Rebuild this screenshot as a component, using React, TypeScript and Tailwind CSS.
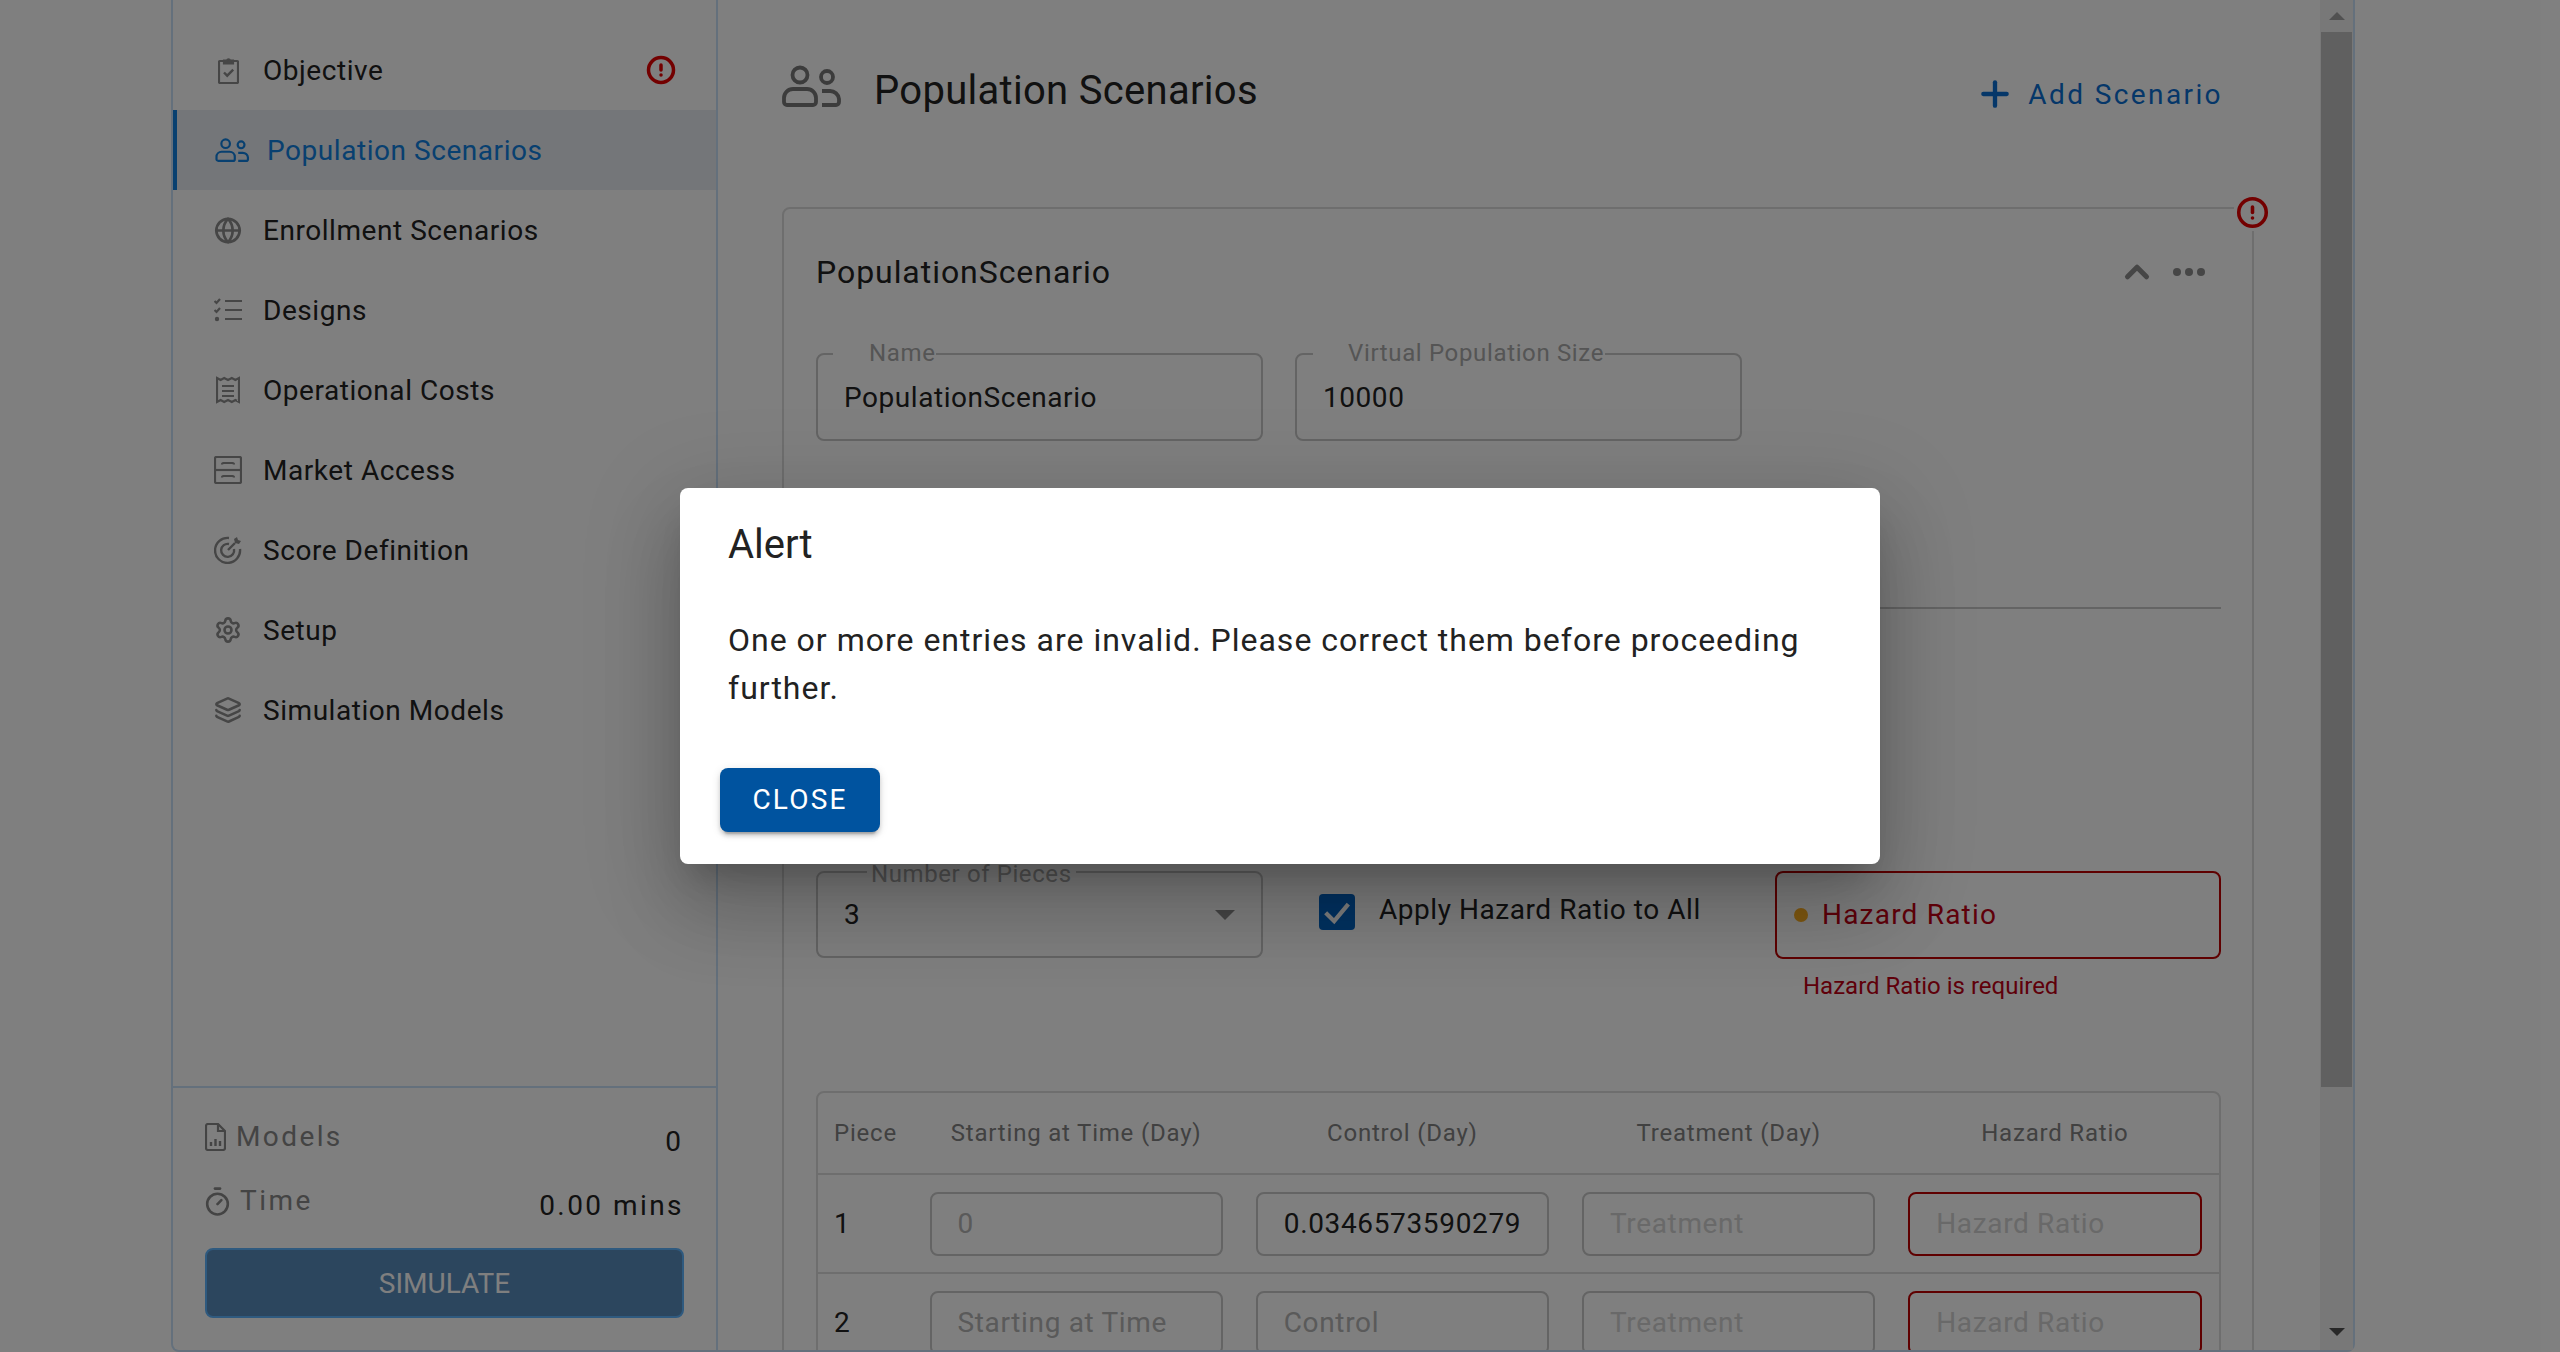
import { ChevronUp, CircleAlert, Globe, Layers, Plus, Settings, Timer } from 'lucide-react';

const Users = ({ className }: { className: string }) => (
  <svg viewBox="0 0 60 42" fill="none" stroke="currentColor" strokeWidth="3.8" className={className}>
    <circle cx="18" cy="10" r="7.5" />
    <path d="M2 37v-4a9 9 0 0 1 9-9h14a9 9 0 0 1 9 9v4a3 3 0 0 1-3 3H5a3 3 0 0 1-3-3z" />
    <circle cx="45" cy="12" r="6" />
    <path d="M40 26h8a9 9 0 0 1 9 8v3a3 3 0 0 1-3 3H40" />
  </svg>
);

const Clipboard = () => (
  <svg viewBox="0 0 21 27" fill="none" stroke="currentColor" strokeWidth="2.2" className="h-[27px] w-[21px]">
    <path d="M6 4H2a1 1 0 0 0-1 1v20a1 1 0 0 0 1 1h17a1 1 0 0 0 1-1V5a1 1 0 0 0-1-1h-4" />
    <path d="M6 6.5V3.5h3a1.6 1.6 0 0 1 3 0h3v3z" fill="currentColor" />
    <path d="M6 15.5l3.2 3.2 6-6" strokeWidth="2.4" />
  </svg>
);

const ListIcon = () => (
  <svg viewBox="0 0 28 24" fill="none" stroke="currentColor" strokeWidth="2.2" className="h-[24px] w-[28px]">
    <path d="M11 3h17M11 12h17M11 21h17" />
    <path d="M0.5 3l2 2 3.500-4M0.500 12l2 2 3.500-4" />
    <circle cx="3" cy="21" r="2.200" fill="currentColor" stroke="none" />
  </svg>
);

const Receipt = () => (
  <svg viewBox="0 0 24 28" fill="none" stroke="currentColor" strokeWidth="2.2" className="h-[28px] w-[24px]">
    <path d="M1 2l3.600 2 3.600-2 3.800 2 3.800-2 3.600 2 3.600-2v24l-3.600-2-3.600 2-3.800-2-3.800 2-3.600-2-3.600 2z" />
    <path d="M6 10h12M6 15h12M6 20h12" />
  </svg>
);

const Drawers = () => (
  <svg viewBox="0 0 28 28" fill="none" stroke="currentColor" strokeWidth="2.2" className="h-[28px] w-[28px]">
    <rect x="1" y="1" width="26" height="26" rx="1.500" />
    <path d="M1 14h26" />
    <path d="M8 8.500a1.500 1.500 0 0 1 1.500-1.500h9a1.500 1.500 0 0 1 1.500 1.500M8 21.500a1.500 1.500 0 0 1 1.500-1.500h9a1.500 1.500 0 0 1 1.500 1.500" />
  </svg>
);

const Target = () => (
  <svg viewBox="0 0 28 28" fill="none" stroke="currentColor" strokeWidth="2.400" className="h-[28px] w-[28px]">
    <path d="M15 2a12.500 12.500 0 1 0 11 11" />
    <path d="M15 8a6.500 6.500 0 1 0 5 5" />
    <path d="M14 14l7-7" />
    <path d="M20 3l1 4 4 1 2-3-3-1-1-3z" fill="currentColor" stroke="none" />
  </svg>
);

const FileChart = () => (
  <svg viewBox="0 0 21 28" fill="none" stroke="currentColor" strokeWidth="2.2" className="h-[28px] w-[21px]">
    <path d="M13 1H3a2 2 0 0 0-2 2v22a2 2 0 0 0 2 2h15a2 2 0 0 0 2-2V8z" />
    <path d="M13 1v7h7" />
    <path d="M6 23v-4M10.500 23v-7M15 23v-5" strokeWidth="2.400" />
  </svg>
);

const navItems = [
  { label: 'Objective', icon: <Clipboard />, error: true },
  { label: 'Population Scenarios', icon: <Users className="h-[24px] w-[35px]" />, active: true },
  { label: 'Enrollment Scenarios', icon: <Globe size={31} strokeWidth={2.300} /> },
  { label: 'Designs', icon: <ListIcon /> },
  { label: 'Operational Costs', icon: <Receipt /> },
  { label: 'Market Access', icon: <Drawers /> },
  { label: 'Score Definition', icon: <Target /> },
  { label: 'Setup', icon: <Settings size={32} strokeWidth={2.200} /> },
  { label: 'Simulation Models', icon: <Layers size={32} strokeWidth={2.200} /> },
];

const rows = [
  { piece: '1', start: '0', control: '0.034657359027997', startGrey: true },
  { piece: '2', start: '', control: '' },
];

const Sidebar = () => (
  <aside className="flex w-[545px] shrink-0 flex-col border-r-2 border-[#c8e0f8]">
    <nav className="flex-1 pt-[30px]">
      {navItems.map((item) => (
        <div
          key={item.label}
          className={`flex h-[80px] items-center text-[28px] tracking-[0.55px] ${
            item.active ? 'border-l-[4px] border-[#1080e0] bg-[#e8ecf2] pl-[38px] text-[#1080e0]' : 'pl-[41px] text-[#222]'
          }`}
        >
          <span className={`flex items-center justify-center text-[#8c8c8c] ${item.active ? 'w-[35px] text-[#1080e0]' : 'w-[28px]'}`}>
            {item.icon}
          </span>
          <span className={`pt-[2px] ${item.active ? 'ml-[17px]' : 'ml-[21px]'}`}>{item.label}</span>
          {item.error && <CircleAlert size={30} strokeWidth={2.800} className="ml-auto mr-[40px] text-[#e60000]" />}
        </div>
      ))}
    </nav>
    <div className="h-[264px] border-t-2 border-[#c8e0f8] px-[32px] pt-[33px] text-[28px]">
      <div className="flex h-[30px] justify-between">
        <span className="flex items-center gap-[10px] pt-[2px] tracking-[2.400px] text-[#888]">
          <FileChart />
          Models
        </span>
        <span className="mr-[3px] text-[#222]">0</span>
      </div>
      <div className="mt-[34px] flex h-[30px] justify-between">
        <span className="flex items-center pt-[2px] tracking-[2.500px] text-[#888]">
          <Timer size={31} strokeWidth={2} className="-ml-[3px]" />
          <span className="ml-[7px]">Time</span>
        </span>
        <span className="tracking-[2.450px] text-[#222]">0.00 mins</span>
      </div>
      <button className="mt-[33px] h-[70px] w-[479px] rounded-[8px] border-2 border-[#5eb4ff] bg-[#588cbc] pt-[1px] text-[28px] text-white">
        SIMULATE
      </button>
    </div>
  </aside>
);

const Field = ({ label, value, w, labelBox }: { label: string; value: string; w: string; labelBox: string }) => (
  <div className={`relative flex h-[88px] items-center rounded-[8px] border-2 border-[#c8c8c8] pl-[26px] pt-[2px] text-[28px] tracking-[0.55px] text-[#222] ${w}`}>
    <span className={`absolute top-[-17px] bg-white text-[24px] leading-[30px] tracking-[0.65px] text-[#aaa] ${labelBox}`}>{label}</span>
    {value}
  </div>
);

const PopulationCard = () => (
  <div className="relative mt-[92px] h-[1300px] rounded-t-[8px] border-2 border-[#dcdcdc] pl-[32px] pr-[31px] pt-[43px]">
    <span className="absolute right-[-19px] top-[-15px] bg-white p-[2px]">
      <CircleAlert size={33} strokeWidth={2.600} className="text-[#e60000]" />
    </span>
    <div className="flex h-[40px] items-center justify-between">
      <span className="text-[32px] tracking-[0.95px] text-[#222]">PopulationScenario</span>
      <span className="mr-[16px] flex items-center gap-[17px] text-[#8c8c8c]">
        <ChevronUp size={38} strokeWidth={3.200} />
        <span className="flex gap-[4px]">
          <i className="block h-[8px] w-[8px] rounded-full bg-[#8c8c8c]" />
          <i className="block h-[8px] w-[8px] rounded-full bg-[#8c8c8c]" />
          <i className="block h-[8px] w-[8px] rounded-full bg-[#8c8c8c]" />
        </span>
      </span>
    </div>

    <div className="mt-[61px] flex gap-[32px]">
      <Field label="Name" value="PopulationScenario" w="w-[447px]" labelBox="left-[15px] pl-[36px]" />
      <Field label="Virtual Population Size" value="10000" w="w-[447px]" labelBox="left-[16px] pl-[35px] pr-[1px]" />
    </div>

    <div className="mt-[166px] border-t-2 border-[#c8c8c8]" />

    <div className="mt-[262px] flex h-[88px] items-start">
      <div className="relative flex h-[87px] w-[447px] items-center justify-between rounded-[8px] border-2 border-[#c8c8c8] pl-[26px] pr-[26px] pt-[1px] text-[28px] text-[#222]">
        <span className="absolute left-[49px] top-[-14px] bg-white px-[4px] text-[24px] leading-[30px] tracking-[0.6px] text-[#aaa]">Number of Pieces</span>
        3
        <span className="h-0 w-0 border-x-[10px] border-t-[10px] border-x-transparent border-t-[#8c8c8c]" />
      </div>
      <div className="ml-[56px] mt-[23px] flex items-start">
        <span className="flex h-[36px] w-[36px] items-center justify-center rounded-[4px] bg-[#0464c4]">
          <svg viewBox="0 0 24 24" fill="none" stroke="white" strokeWidth="3" className="h-[34px] w-[34px]">
            <path d="M4 12.500l6 6 10-12" />
          </svg>
        </span>
        <span className="-mt-[5px] ml-[24px] text-[28px] tracking-[0.55px] text-[#222]">Apply Hazard Ratio to All</span>
      </div>
      <div className="ml-auto">
        <div className="flex h-[88px] w-[446px] items-center rounded-[8px] border-2 border-[#be0000] pl-[17px] text-[28px] tracking-[1.200px] text-[#be0014]">
          <span className="mr-[14px] h-[14px] w-[14px] rounded-full bg-[#ffb020]" />
          Hazard Ratio
        </div>
        <p className="ml-[28px] mt-[12px] text-[24px] leading-[30px] text-[#be0014]">Hazard Ratio is required</p>
      </div>
    </div>

    <div className="mt-[132px] rounded-t-[8px] border-2 border-[#dcdcdc]">
      <div className="grid h-[82px] grid-cols-[78.5px_293.25px_293.25px_293.25px_293.25px] items-center gap-x-[33px] border-b-2 border-[#dcdcdc] text-[24px] tracking-[0.8px] text-[#828282]">
        <span className="pl-[16px]">Piece</span>
        <span className="whitespace-nowrap text-center">Starting at Time (Day)</span>
        <span className="text-center">Control (Day)</span>
        <span className="text-center">Treatment (Day)</span>
        <span className="text-center">Hazard Ratio</span>
      </div>
      {rows.map((row) => (
        <div
          key={row.piece}
          className="grid h-[99px] grid-cols-[78.5px_293.25px_293.25px_293.25px_293.25px] items-center gap-x-[33px] border-b-2 border-[#dcdcdc] text-[28px] tracking-[0.65px] text-[#222]"
        >
          <span className="pl-[16px]">{row.piece}</span>
          <input
            readOnly
            value={row.start}
            placeholder="Starting at Time"
            className={`h-[64px] w-full rounded-[8px] border-2 border-[#c8c8c8] px-[26px] placeholder:text-[#b4b4b4] ${row.startGrey ? 'text-[#b4b4b4]' : ''}`}
          />
          <input
            readOnly
            value={row.control}
            placeholder="Control"
            className="h-[64px] w-full rounded-[8px] border-2 border-[#c8c8c8] pl-[26px] pr-[25px] placeholder:text-[#b4b4b4]"
          />
          <input
            readOnly
            placeholder="Treatment"
            className="h-[64px] w-full rounded-[8px] border-2 border-[#c8c8c8] px-[26px] placeholder:text-[#d2d2d2]"
          />
          <input
            readOnly
            placeholder="Hazard Ratio"
            className="h-[64px] w-full rounded-[8px] border-2 border-[#be0000] px-[26px] placeholder:text-[#d2d2d2]"
          />
        </div>
      ))}
    </div>
  </div>
);

const Scrollbar = () => (
  <div className="flex w-[33px] shrink-0 flex-col bg-[#f1f1f1] px-[1px]">
    <div className="flex h-[32px] items-center justify-center">
      <span className="h-0 w-0 border-x-[8px] border-b-[8px] border-x-transparent border-b-[#a3a3a3]" />
    </div>
    <div className="h-[1055px] bg-[#c1c1c1]" />
    <div className="flex flex-1 items-end justify-center pb-[14px]">
      <span className="h-0 w-0 border-x-[8px] border-t-[8px] border-x-transparent border-t-[#505050]" />
    </div>
  </div>
);

const AlertDialog = () => (
  <div className="absolute inset-0 flex items-center justify-center bg-black/50">
    <div className="h-[376px] w-[1200px] rounded-[8px] bg-white px-[48px] pt-[33px] shadow-[0_22px_30px_-14px_rgba(0,0,0,0.2),0_48px_76px_6px_rgba(0,0,0,0.14),0_18px_92px_16px_rgba(0,0,0,0.12)]">
      <h2 className="text-[40px] font-normal leading-[48px] text-[#222]">Alert</h2>
      <p className="mt-[47px] text-[32px] leading-[48px] tracking-[1px] text-[#222]">
        One or more entries are invalid. Please correct them before proceeding further.
      </p>
      <button className="-ml-[8px] mt-[56px] h-[64px] w-[160px] rounded-[8px] bg-[#00539f] text-[28px] tracking-[2.200px] text-white shadow-[0_6px_2px_-4px_rgba(0,0,0,0.2),0_4px_4px_0_rgba(0,0,0,0.14),0_2px_10px_0_rgba(0,0,0,0.12)]">
        CLOSE
      </button>
    </div>
  </div>
);

export default function App() {
  return (
    <div className="relative h-[1352px] w-[2560px] overflow-hidden bg-white [font-family:Roboto,sans-serif]">
      <div className="ml-[171px] flex h-[1352px] w-[2184px] rounded-b-[8px] border-x-2 border-b-2 border-[#c8e0f8]">
        <Sidebar />
        <main className="h-full min-w-0 flex-1 overflow-hidden pl-[64px] pr-[66px] pt-[65px]">
          <div className="flex h-[50px] justify-between">
            <div className="flex items-center">
              <span className="mb-[8px] text-[#787878]">
                <Users className="h-[42px] w-[60px]" />
              </span>
              <h1 className="ml-[32px] pt-[2px] text-[40px] font-normal tracking-[0.3px] text-[#222]">Population Scenarios</h1>
            </div>
            <div className="mr-[31px] mt-[8px] flex items-center text-[28px] tracking-[2.400px] text-[#0a6ed2]">
              <Plus size={40} strokeWidth={2.600} />
              <span className="ml-[13px] pt-[1px]">Add Scenario</span>
            </div>
          </div>
          <PopulationCard />
        </main>
        <Scrollbar />
      </div>
      <AlertDialog />
    </div>
  );
}
